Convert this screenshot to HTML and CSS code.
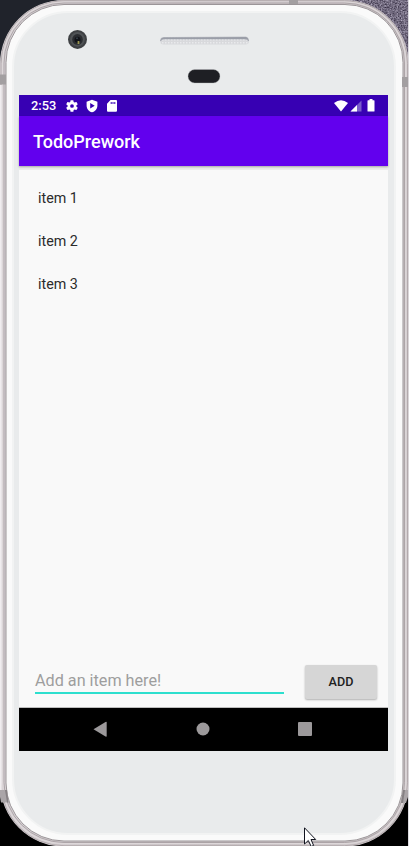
FILE: index.html
```html
<!DOCTYPE html>
<html lang="en">
<head>
<meta charset="utf-8">
<title>TodoPrework</title>
<link rel="stylesheet" href="styles.css">
</head>
<body>
<div class="stage">
  <svg class="chassis" width="409" height="846" viewBox="0 0 409 846" aria-hidden="true">
    <defs>
      <filter id="grain" x="0" y="0" width="100%" height="100%" color-interpolation-filters="sRGB">
        <feTurbulence type="fractalNoise" baseFrequency="0.7" numOctaves="2" seed="4"/>
        <feColorMatrix values="0.9 0 0 0 0  0.9 0 0 0 -0.03  0.9 0 0 0 0.05  0 0 0 0 1"/>
      </filter>
      <pattern id="mesh" width="3" height="3" patternUnits="userSpaceOnUse">
        <rect width="3" height="3" fill="#d8d9dc"/><rect width="1.5" height="1.5" fill="#e9eaec"/>
      </pattern>
      <linearGradient id="edge" x1="0" y1="0" x2="1" y2="0">
        <stop offset="0" stop-color="#d8d3d6"/><stop offset=".5" stop-color="#c9c2c5"/><stop offset="1" stop-color="#d3cdcf"/>
      </linearGradient>
    </defs>
    <rect width="409" height="846" fill="#000"/>
    <rect width="200" height="80" fill="#20232b"/>
    <rect x="340" width="69" height="80" fill="#706b80"/>
    <rect x="340" width="69" height="80" filter="url(#grain)" opacity=".8"/>
    <path d="M408.500 0V846" stroke="#dddbe0"/>
    <path d="M0 84H6V790H0zM402 84H408.500V790H402z" fill="#e4dfe1"/>
    <rect x="0" y="0" width="408.500" height="846.500" rx="64" fill="url(#edge)"/>
    <rect x="1" y=".7" width="406.500" height="845" rx="63" fill="none" stroke="#b3aaad"/>
    <rect x="2.800" y="2" width="403" height="841.500" rx="61" fill="none" stroke="#ddd7d9" stroke-width="1.200"/>
    <rect x="4" y="3" width="400.500" height="839.500" rx="60" fill="none" stroke="#a39b9e" stroke-width=".8"/>
    <rect x="6" y="4.500" width="397" height="836.500" rx="58" fill="#fafafa" stroke="#9b9598"/>
    <rect x="13" y="12" width="382" height="822" rx="55" fill="#e9ebec" stroke="#f2f3f3" stroke-width="2"/>
    <path d="M0 85H1.800V790H0z" fill="#f0edef"/>
    <path d="M0 74.500H6V84.500H0zM402 77H408V87H402zM289 0H298V4H289z" fill="#a39fa1"/>
    <path d="M0 790H7L8.500 802.500H1L0 797zM403 790H408V797L406 803H401z" fill="#aaa5a8"/>
    <path d="M5 790H7L8.500 802.500H7zM403 790H405L403 803H401z" fill="#858083"/>
    <circle cx="77.500" cy="39.400" r="9.500" fill="#3e4043"/>
    <circle cx="77.500" cy="39.400" r="7.300" fill="#505356"/>
    <circle cx="77.500" cy="39.400" r="5.300" fill="#2a2c30"/>
    <circle cx="77.500" cy="39.800" r="3" fill="#111318"/>
    <path d="M78.500 41V44" stroke="#9b9650" stroke-width="1.800"/>
    <path d="M77 37.500V39" stroke="#52616c"/>
    <rect x="160" y="37" width="89" height="7.500" rx="3.500" fill="url(#mesh)"/>
    <path d="M160.500 41Q160.500 37.500 164 37.500L246 37Q248.500 37.500 248.500 41Q248 39 245 39L164 39Q161.500 39 160.500 41z" fill="#9b9ea8" stroke="#9b9ea8" stroke-width=".5"/>
    <rect x="188" y="69.500" width="32" height="13.500" rx="6.700" fill="#1e1f24" stroke="#b9bbbe" stroke-width=".4"/>
  </svg>

  <main class="screen">
    <header class="status">
      <span class="time">2:53</span>
      <svg class="gear" width="14" height="14" viewBox="0 0 24 24"><path fill="#fff" fill-rule="evenodd" d="M19.400 13c.1-.7.1-1.300 0-2l2.100-1.700c.2-.1.200-.4.100-.6l-2-3.500c-.1-.2-.4-.3-.6-.2l-2.500 1a7 7 0 0 0-1.700-1l-.4-2.600a.5.5 0 0 0-.5-.4h-4a.5.500 0 0 0-.5.400L9 5.100a7 7 0 0 0-1.700 1L4.900 5c-.2-.1-.5 0-.6.200l-2 3.500c-.1.200 0 .5.100.600L4.600 11a8 8 0 0 0 0 2l-2.200 1.700c-.1.100-.2.400-.1.600l2 3.500c.1.200.4.300.6.200l2.500-1a7 7 0 0 0 1.600 1l.4 2.600c0 .2.200.4.500.4h4c.2 0 .4-.2.500-.4l.4-2.600a7 7 0 0 0 1.700-1l2.500 1c.2.100.5 0 .6-.2l2-3.500c.1-.2 0-.5-.1-.6zM12 15.200a3.200 3.200 0 1 1 0-6.400 3.200 3.200 0 0 1 0 6.400z"/></svg>
      <svg class="shield" width="12" height="14" viewBox="0 0 12 14"><path fill="#fff" fill-rule="evenodd" d="M6 .7 11.400 2.700V6.500C11.400 10 9 12.500 6 13.300 3 12.500.6 10 .6 6.500V2.700zM4.200 4V9.600L8.700 6.800z"/></svg>
      <svg class="card" width="10" height="12" viewBox="0 0 10 12"><path fill="#fff" fill-rule="evenodd" d="M3.500 0H9Q10 0 10 1V10.700Q10 11.700 9 11.700H1Q0 11.700 0 10.700V3.700zM3.700 2V4H4.700V2zM5.500 2V4H6.500V2zM7.300 2V4H8.300V2z"/></svg>
      <span class="fill"></span>
      <svg width="14" height="12" viewBox="0 0 14 12"><path fill="#fff" d="M0 3Q7-2.400 14 3L7 11.500z"/></svg>
      <svg class="signal" width="12" height="12" viewBox="0 0 12 12"><path fill="#7a5ccb" d="M11.500 .5V11.500H.5z"/><path fill="#fff" d="M7 5V11.500H.5z"/></svg>
      <svg class="battery" width="8" height="13" viewBox="0 0 8 13"><path fill="#fff" d="M2.500 0H5.500V1.200H7Q7.500 1.200 7.500 2V12Q7.500 12.500 7 12.500H1Q.5 12.500.5 12V2Q.5 1.200 1 1.200H2.500z"/></svg>
    </header>
    <h1 class="toolbar">TodoPrework</h1>
    <ul class="items">
      <li>item 1</li>
      <li>item 2</li>
      <li>item 3</li>
    </ul>
    <div class="entry">
      <div class="field">Add an item here!</div>
      <button class="add" type="button">ADD</button>
    </div>
    <nav class="nav">
      <svg width="369" height="43" viewBox="0 0 369 43"><g fill="#9c999b"><path d="M74.500 21.200 86.500 14Q87.700 13.500 87.700 14.500V28Q87.700 29 86.500 28.500z"/><circle cx="184" cy="21" r="6.500"/><rect x="279" y="14" width="14" height="14" rx="1"/></g></svg>
    </nav>
  </main>

  <svg class="pointer" width="13" height="20" viewBox="0 0 13 20" aria-hidden="true"><path d="M.5.8V17L4.300 13.500 7.200 19.500 9.600 18.400 7 12.500H11.700z" fill="#fff" stroke="#10131e"/></svg>
</div>
</body>
</html>
```
FILE: styles.css
```css
* { box-sizing: border-box; }

body {
  margin: 0;
  font-family: Roboto, "Liberation Sans", sans-serif;
}

.stage {
  position: relative;
  width: 409px;
  height: 846px;
  padding: 95px 21px 95px 19px;
  overflow: hidden;
}

.chassis {
  position: absolute;
  inset: 0;
}

.screen {
  position: relative;
  display: flex;
  flex-direction: column;
  width: 369px;
  height: 656px;
  background: #f9f9f9;
}

.status {
  display: flex;
  align-items: center;
  flex: 0 0 21px;
  height: 21px;
  min-height: 0;
  padding: 0 13px 0 12px;
  background: #3700b3;
  color: #fff;
}

.status svg { flex: none; }

.time {
  width: 34px;
  font-size: 12.8px;
  font-weight: 500;
  line-height: 21px;
}

.shield { margin-left: 7px; }
.card { margin-left: 9px; }
.fill { flex: 1; }
.signal { margin: 1px 5px 0 2px; }

.toolbar {
  flex: 0 0 50px;
  margin: 0;
  padding: 0 14px;
  background: #6200ee;
  box-shadow: 0 1px 2px rgba(0, 0, 0, .3), 0 4px 0 rgba(0, 0, 0, .05);
  color: #fff;
  font-size: 18px;
  font-weight: 500;
  line-height: 51px;
  height: 50px;
  min-height: 0;
}

.items {
  flex: 1;
  margin: 0;
  padding: 11px 19px 9px;
  list-style: none;
  color: #2b2b2b;
  font-size: 14.3px;
}

.items li {
  height: 43px;
  line-height: 43px;
}

.entry {
  display: flex;
  align-items: flex-start;
  flex: 0 0 43px;
  padding-left: 16px;
  border-bottom: 1px solid #bdbdbd;
}

.field {
  width: 249px;
  height: 29px;
  border-bottom: 2px solid #2ddfce;
  color: #9e9e9e;
  font-size: 16.2px;
  line-height: 32px;
}

.add {
  width: 72px;
  height: 34px;
  margin-left: 21px;
  padding: 0;
  border: 0;
  border-radius: 2px;
  background: #d6d6d6;
  box-shadow: 0 1px 2px rgba(0, 0, 0, .3);
  color: #212121;
  font: 500 12.6px/34px Roboto, sans-serif;
}

.nav {
  flex: 0 0 43px;
  background: #000;
}

.nav svg { display: block; }

.pointer {
  position: absolute;
  left: 304px;
  top: 827px;
}
```
